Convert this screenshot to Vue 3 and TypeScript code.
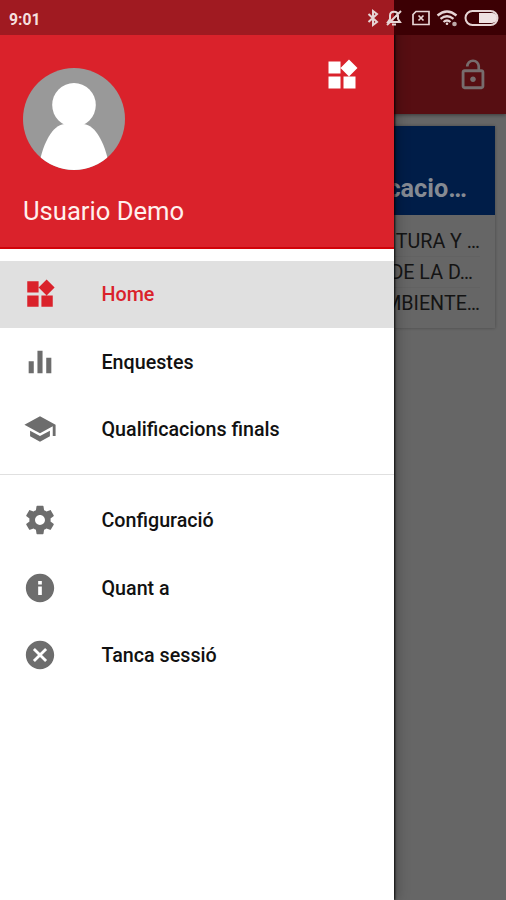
<script setup lang="ts">
interface Item { label: string; icon: string; active?: boolean }

const widgets = 'M13 13v8h8v-8h-8zM3 21h8v-8H3v8zM3 3v8h8V3H3zm13.66-1.31L11 7.34 16.66 13l5.66-5.66-5.66-5.65z'

const main: Item[] = [
  { label: 'Home', icon: widgets, active: true },
  { label: 'Enquestes', icon: 'M4 11.5h3.6V20H4zM10.2 4h3.6v16h-3.6zM16.4 9H20v11h-3.6z' },
  { label: 'Qualificacions finals', icon: 'M5 13.18v4L12 21l7-3.82v-4L12 17l-7-3.82zM12 3L1 9l11 6 9-4.91V17h2V9L12 3z' },
]
const secondary: Item[] = [
  { label: 'Configuració', icon: 'M19.43 12.98c.04-.32.07-.64.07-.98s-.03-.66-.07-.98l2.11-1.65c.19-.15.24-.42.12-.64l-2-3.46c-.12-.22-.39-.3-.61-.22l-2.49 1c-.52-.4-1.08-.73-1.69-.98l-.38-2.65C14.46 2.18 14.25 2 14 2h-4c-.25 0-.46.18-.49.42l-.38 2.65c-.61.25-1.17.59-1.69.98l-2.49-1c-.23-.09-.49 0-.61.22l-2 3.46c-.13.22-.07.49.12.64l2.11 1.65c-.04.32-.07.65-.07.98s.03.66.07.98l-2.11 1.65c-.19.15-.24.42-.12.64l2 3.46c.12.22.39.3.61.22l2.49-1c.52.4 1.08.73 1.69.98l.38 2.65c.03.24.24.42.49.42h4c.25 0 .46-.18.49-.42l.38-2.65c.61-.25 1.17-.59 1.69-.98l2.49 1c.23.09.49 0 .61-.22l2-3.46c.12-.22.07-.49-.12-.64l-2.11-1.65zM12 15.5c-1.93 0-3.5-1.57-3.5-3.5s1.57-3.5 3.5-3.5 3.5 1.57 3.5 3.5-1.57 3.5-3.5 3.5z' },
  { label: 'Quant a', icon: 'M12 2C6.48 2 2 6.48 2 12s4.48 10 10 10 10-4.48 10-10S17.52 2 12 2zm1.300 15h-2.600v-6h2.600v6zm0-7.500h-2.600V7h2.600v2.500z' },
  { label: 'Tanca sessió', icon: 'M12 2C6.47 2 2 6.47 2 12s4.47 10 10 10 10-4.47 10-10S17.53 2 12 2zm5 13.59L15.59 17 12 13.41 8.41 17 7 15.59 10.59 12 7 8.41 8.41 7 12 10.59 15.59 7 17 8.41 13.41 12 17 15.59z' },
]
const subjects = ['TURA Y …', 'DE LA D…', 'MBIENTE…']
</script>

<template>
  <div class="screen">
    <div class="page">
      <header class="appbar">
        <svg class="lock" viewBox="0 0 24 24"><path d="M12 17c1.1 0 2-.9 2-2s-.9-2-2-2-2 .9-2 2 .9 2 2 2zm6-9h-1V6c0-2.76-2.24-5-5-5S7 3.24 7 6h1.9c0-1.71 1.39-3.1 3.1-3.1 1.71 0 3.1 1.39 3.1 3.1v2H6c-1.1 0-2 .9-2 2v10c0 1.1.9 2 2 2h12c1.1 0 2-.9 2-2V10c0-1.1-.9-2-2-2zm0 12H6V10h12v10z" /></svg>
      </header>
      <section class="card">
        <h2 class="card-title">cacio…</h2>
        <ul class="subjects">
          <li v-for="s in subjects" :key="s">{{ s }}</li>
        </ul>
      </section>
    </div>

    <aside class="drawer">
      <div class="profile">
        <div class="profile-top">
          <svg class="avatar" viewBox="0 0 102 102">
            <defs><clipPath id="disc"><circle cx="51" cy="51" r="51" /></clipPath></defs>
            <g clip-path="url(#disc)">
              <rect width="102" height="102" fill="#999" />
              <ellipse cx="51" cy="37" rx="21.8" ry="22" fill="#fff" />
              <path d="M17 92C22 70 32 56 42 56H60C70 56 80 70 85 92V103H17Z" fill="#fff" />
            </g>
          </svg>
          <svg class="switcher" viewBox="0 0 24 24"><path :d="widgets" /></svg>
        </div>
        <div class="name">Usuario Demo</div>
      </div>
      <nav class="group">
        <a v-for="i in main" :key="i.label" class="item" :class="{ active: i.active }">
          <svg class="icon" viewBox="0 0 24 24"><path :d="i.icon" /></svg>
          <span class="label">{{ i.label }}</span>
        </a>
      </nav>
      <nav class="group divided">
        <a v-for="i in secondary" :key="i.label" class="item">
          <svg class="icon" viewBox="0 0 24 24"><path :d="i.icon" /></svg>
          <span class="label">{{ i.label }}</span>
        </a>
      </nav>
    </aside>

    <div class="status">
      <span class="clock">9:01</span>
      <svg class="indicators" viewBox="0 0 136 36" fill="none" stroke="#e6d5d5" stroke-width="2">
        <path d="M-1.500 14L7 22L3 25V11L7 14L-1.500 22" />
        <path d="M18 22h12l-2-3v-3.500c0-5-8-5-8 0V19zM22 24.500h4M31 11L17 25" />
        <path d="M46 11.500h13v13H43v-10zM48.500 15.500l5 5m0-5l-5 5" stroke-width="1.700" />
        <g stroke-width="2.300">
          <path d="M67.500 15.500q9.500-8 19 0M70.500 18.800q6.500-5 13 0M73.500 22q3.500-3 7 0" />
          <circle cx="77" cy="23.800" r="1.300" fill="#e6d5d5" stroke="none" />
          <circle cx="84.500" cy="24" r="2.300" fill="#bda9a9" stroke="none" />
        </g>
        <rect x="95.500" y="11" width="32" height="14" rx="7" />
        <path d="M109 13h13a5 5 0 0 1 0 10h-13z" fill="#eee1e1" stroke="none" />
      </svg>
    </div>
  </div>
</template>

<style>
body { margin: 0; }
</style>

<style scoped>
* { box-sizing: border-box; }
.screen {
  position: relative;
  width: 506px;
  height: 900px;
  overflow: hidden;
  background: #666;
  font-family: Roboto, "Liberation Sans", sans-serif;
}
.appbar {
  height: 114px;
  padding: 35px 16px 0 0;
  display: flex;
  justify-content: flex-end;
  align-items: center;
  background: #570e12;
  box-shadow: 0 1px 4px rgba(0, 0, 0, .45);
}
.lock { width: 34px; height: 34px; fill: #776c6d; }
.card {
  width: 484px;
  height: 202px;
  margin: 12px 11px 0;
  background: #666;
  box-shadow: 0 0 3px rgba(0, 0, 0, .3);
}
.card-title {
  height: 89px;
  margin: 0;
  padding: 47px 28px 0 0;
  background: #001d48;
  color: #858a93;
  font-size: 25.300px;
  line-height: 32px;
  font-weight: 700;
  text-align: right;
}
.subjects { list-style: none; margin: 0; padding: 11px 15px 0 0; }
.subjects li {
  height: 31px;
  line-height: 31px;
  font-size: 19.700px;
  color: #141414;
  text-align: right;
  border-bottom: 1px solid #626262;
}
.subjects li:nth-child(2) { padding-right: 7px; }
.subjects li:last-child { border-bottom: 0; }
.drawer {
  position: absolute;
  inset: 0 auto 0 0;
  width: 394px;
  background: #fff;
  box-shadow: 1px 0 2px rgba(0, 0, 0, .9), 3px 0 12px rgba(0, 0, 0, .28);
}
.profile {
  height: 249px;
  padding: 68px 35px 0 23px;
  background: #da222b;
  border-bottom: 2px solid #d10309;
}
.profile-top { display: flex; justify-content: space-between; align-items: flex-start; }
.avatar { width: 102px; height: 102px; display: block; }
.switcher { width: 36px; height: 36px; fill: #fff; margin: -11px -1px 0 0; }
.name { margin-top: 25px; font-size: 25.600px; line-height: 32px; color: #fff0ee; }
.group { padding: 11.500px 0 11.200px; }
.divided { border-top: 1.500px solid #e0e0e0; }
.item {
  display: flex;
  align-items: center;
  height: 67.450px;
  padding-left: 23px;
  color: #111;
  font-size: 19.700px;
  font-weight: 500;
}
.label { padding-top: 1.500px; }
.icon { width: 34px; height: 34px; margin-right: 44.500px; fill: #6d6d6d; }
.active { background: #e0e0e0; color: #da222b; }
.active .icon { fill: #da222b; }
.status {
  position: absolute;
  inset: 0 0 auto 0;
  height: 35px;
  display: flex;
  justify-content: space-between;
  align-items: center;
  padding-left: 9px;
  background: linear-gradient(90deg, #a01a21 394px, #3c0004 394px);
}
.clock { font-size: 15.700px; font-weight: 700; color: #f5dfdf; padding-top: 3px; }
.indicators { width: 136px; height: 36px; overflow: visible; }
</style>
